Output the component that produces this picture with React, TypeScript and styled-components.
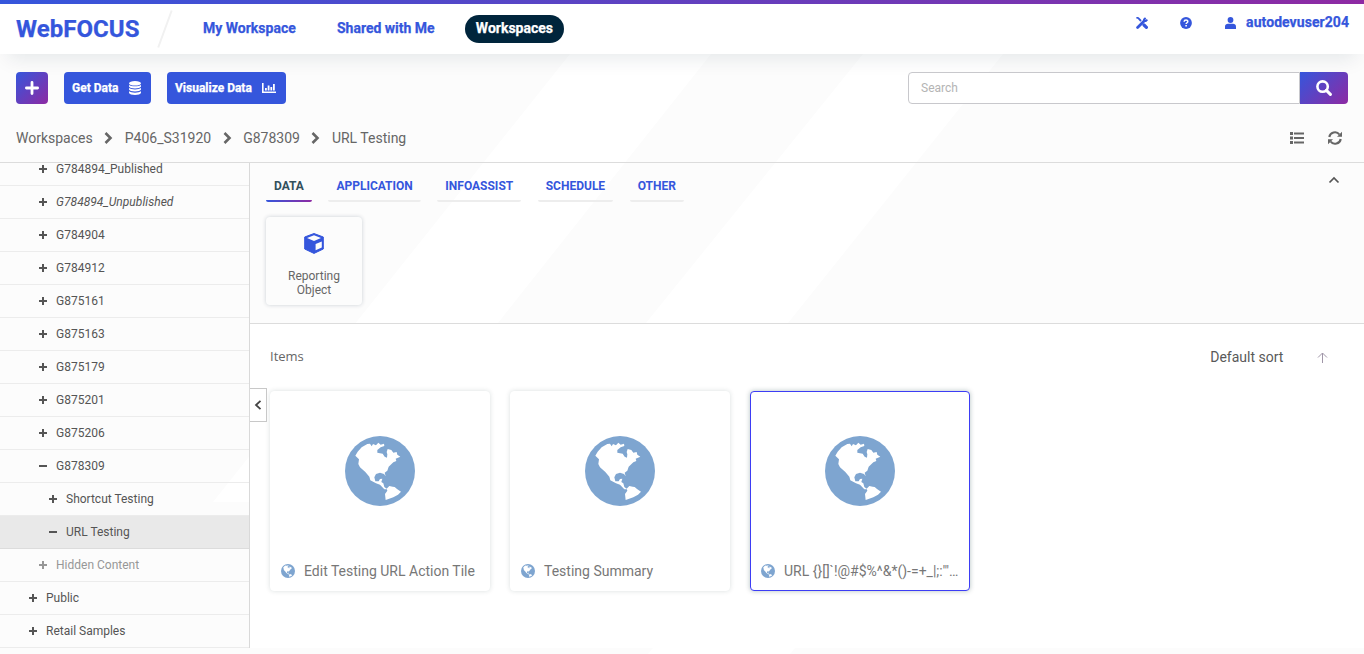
import React from "react";
import styled, { createGlobalStyle, css } from "styled-components";

const GlobalStyle = createGlobalStyle`
  * { box-sizing: border-box; }
  html, body { margin: 0; padding: 0; overflow: hidden; }
  body { font-family: Roboto, "Liberation Sans", sans-serif; font-size: 14px; color: #595959; }
  button, input { font: inherit; }
  button { border: 0; padding: 0; background: none; }
  svg { display: block; flex: none; }
`;

const blue = "#3556dc";
const gradient = "linear-gradient(135deg, #3556dc 0%, #8e2aa3 100%)";

const heavy = css`
  font-weight: 700;
  -webkit-text-stroke: 0.25px currentColor;
`;

const Page = styled.div`
  position: relative;
  isolation: isolate;
  width: 1364px;
  height: 654px;
  display: flex;
  flex-direction: column;
  background: #fcfcfc;
  overflow: hidden;
`;

const Backdrop = styled.svg`
  position: absolute;
  inset: 0;
  z-index: -1;
`;

const TopBar = styled.header`
  height: 54px;
  flex: none;
  border-top: 4px solid transparent;
  background:
    linear-gradient(#fff, #fff) padding-box,
    linear-gradient(90deg, #3556dc, #8e2aa3) border-box;
  box-shadow: 0 12px 20px -8px rgba(0, 37, 60, 0.1);
  display: flex;
  align-items: center;
  padding: 0 15px 0 16px;
`;

const Brand = styled.div`
  width: 141px;
  font-size: 24px;
  ${heavy}
  letter-spacing: 0.05px;
  color: ${blue};
  line-height: 48px;
`;

const Nav = styled.nav`
  display: flex;
  align-items: center;
  gap: 19.2px;
  margin-left: 19px;
  flex: 1;
`;

const NavLink = styled.a<{ $active?: boolean }>`
  height: 28px;
  line-height: 27px;
  padding: 0 11px;
  border-radius: 14px;
  ${heavy}
  white-space: nowrap;
  color: ${(p) => (p.$active ? "#fff" : blue)};
  background: ${(p) => (p.$active ? "#00253c" : "transparent")};
`;

const Account = styled.div`
  display: flex;
  align-items: center;
  height: 36px;
  align-self: flex-start;
  color: ${blue};
  ${heavy}
  letter-spacing: 0.06px;
`;

const AccountIcon = styled.span<{ $gap: number }>`
  margin: 1px ${(p) => p.$gap}px 0 0;
`;

const Toolbar = styled.section`
  height: 66px;
  padding: 18px 16px 0;
  display: flex;
  align-items: flex-start;
  gap: 16px;
`;

const AddButton = styled.button`
  width: 32px;
  height: 32px;
  border-radius: 4px;
  background: ${gradient};
  display: grid;
  place-items: center;
`;

const ActionButton = styled.button<{ $width: number }>`
  width: ${(p) => p.$width}px;
  height: 32px;
  border-radius: 4px;
  padding: 0 10px 0 8px;
  display: flex;
  align-items: center;
  justify-content: space-between;
  background: ${blue};
  color: #fff;
  font-size: 12px;
  ${heavy}
  white-space: nowrap;
`;

const SearchBox = styled.div`
  display: flex;
  width: 440px;
  margin-left: auto;
`;

const SearchInput = styled.input`
  flex: 1;
  height: 32px;
  border: 1px solid #c8c8cc;
  border-radius: 4px 0 0 4px;
  background: #fff;
  padding: 0 12px;
  font-size: 12px;
  &::placeholder { color: #b4b4b4; opacity: 1; }
`;

const SearchButton = styled.button`
  width: 48px;
  height: 32px;
  border-radius: 0 4px 4px 0;
  background: ${gradient};
  display: grid;
  place-items: center;
`;

const PathBar = styled.div`
  height: 43px;
  border-bottom: 1px solid #dcdcdc;
  padding: 0 22px 6px 16px;
  display: flex;
  align-items: center;
  justify-content: space-between;
`;

const Crumbs = styled.div`
  display: flex;
  align-items: center;
  gap: 11.5px;
  line-height: 20px;
  color: #666;
`;

const PathTools = styled.div`
  display: flex;
  align-items: center;
  gap: 24px;
`;

const Body = styled.div`
  height: 485px;
  display: flex;
`;

const Tree = styled.aside`
  width: 250px;
  border-right: 1px solid #d9d9d9;
  overflow: hidden;
  display: flex;
  flex-direction: column;
  justify-content: flex-end;
`;

const TreeRow = styled.div<{ $level: number; $selected?: boolean; $muted?: boolean; $italic?: boolean }>`
  height: 33px;
  flex: none;
  border-bottom: 1px solid ${(p) => (p.$selected ? "#dcdcdc" : "#ececec")};
  padding: 0 0 0 ${(p) => 18 + p.$level * 10}px;
  display: flex;
  align-items: center;
  gap: 8px;
  font-size: 12px;
  color: #555;
  ${(p) => p.$selected && css`background: #e9e9e9;`}
  ${(p) => p.$muted && css`color: #979797;`}
  ${(p) => p.$italic && css`font-style: italic; letter-spacing: 0.04px;`}
`;

const Main = styled.main`
  flex: 1;
  display: flex;
  flex-direction: column;
`;

const CreatePanel = styled.section`
  height: 161px;
  border-bottom: 1px solid #dcdcdc;
  padding: 7px 24px 0 16px;
`;

const TabStrip = styled.div`
  display: flex;
  justify-content: space-between;
`;

const Tabs = styled.div`
  display: flex;
  gap: 16.5px;
`;

const Tab = styled.div<{ $active?: boolean }>`
  height: 32px;
  padding: 0 8px;
  font-size: 12px;
  line-height: 32px;
  font-weight: 700;
  color: ${(p) => (p.$active ? "#33505c" : blue)};
  border-radius: 2px;
  background: linear-gradient(90deg, ${(p) => (p.$active ? "#3556dc, #8e2aa3" : "#ededed, #ededed")}) bottom / 100% 2px no-repeat;
`;

const CreateTile = styled.div`
  width: 96px;
  height: 88px;
  margin-top: 15px;
  border-radius: 4px;
  background: #fcfcfc;
  box-shadow: 0 0 4px rgba(0, 37, 60, 0.2);
  display: flex;
  flex-direction: column;
  align-items: center;
  padding-top: 16px;
  font-size: 12px;
  line-height: 14px;
  text-align: center;
  color: #666;
`;

const TileLabel = styled.span`
  width: 60px;
  margin-top: 15px;
`;

const ItemsPanel = styled.section`
  position: relative;
  flex: 1;
  background: #fff;
  padding: 22px 35.6px 0 20px;
`;

const ItemsHeader = styled.div`
  height: 22px;
  display: flex;
  align-items: center;
  justify-content: space-between;
`;

const ItemsTitle = styled.span`
  font-family: "Open Sans", Roboto, sans-serif;
  font-size: 13px;
  line-height: 18px;
  padding-bottom: 2px;
  color: #666;
`;

const Sort = styled.div`
  display: flex;
  align-items: center;
  gap: 33px;
`;

const CardRow = styled.div`
  display: flex;
  gap: 20px;
  margin-top: 23px;
`;

const Card = styled.article<{ $selected?: boolean }>`
  width: 220px;
  height: 200px;
  border-radius: 4px;
  border: 1px solid ${(p) => (p.$selected ? "#3d3df5" : "#fff")};
  background: #fff;
  box-shadow: 0 0 5px rgba(0, 50, 50, ${(p) => (p.$selected ? 0.3 : 0.15)});
  display: flex;
  flex-direction: column;
`;

const CardArt = styled.div`
  height: 158px;
  display: grid;
  place-items: center;
`;

const CardCaption = styled.div`
  height: 40px;
  padding: 2px 10px 0;
  display: flex;
  align-items: center;
  gap: 9px;
  line-height: 16px;
  color: #777;
  white-space: nowrap;
`;

const CollapseHandle = styled.button`
  position: absolute;
  left: 0;
  top: 64px;
  width: 17px;
  height: 34px;
  border: 1px solid #c8c8c8;
  border-left: 0;
  background: #fff;
  display: grid;
  place-items: center;
`;

const Globe = ({ size }: { size: number }) => (
  <svg width={size} height={size} viewBox="285 288 210 210">
    <circle cx="390" cy="393" r="105" fill="#7ea5d0" />
    <path
      fill="#fff"
      d="M316 347L323 335L335 322L352 312L360 311L365 319L369 312L378 316L385 308L392 314L402 311L403 318L392 322L382 330L382 338L398 341L404 350L411 353L412 343L410 336L413 327L424 330L430 338L440 336L442 344L451 350L437 356L439 363L430 367L416 380L412 392L404 398L407 409L402 402L390 398L378 402L373 412L376 424L386 424L390 417L397 416L394 426L400 430L403 441L411 447L403 448L390 434L378 430L361 421L358 410L346 396L330 382L325 372L327 358Z M410 446L418 438L428 440L434 441L441 447L453 455L444 464L430 472L407 480L405 462L412 452Z"
    />
  </svg>
);

const Sign = ({ minus }: { minus?: boolean }) => (
  <svg width="10" height="10" viewBox="0 0 10 10" fill="currentColor">
    <rect x="1" y="4" width="8" height="2" />
    {!minus && <rect x="4" y="1" width="2" height="8" />}
  </svg>
);

const Chevron = () => (
  <svg width="9" height="12" viewBox="0 0 9 12" fill="none" stroke="#666" strokeWidth="2.6">
    <path d="M1.5 1L6.5 6L1.5 11" />
  </svg>
);

const tree = [
  { label: "G784894_Published", level: 2 },
  { label: "G784894_Unpublished", level: 2, italic: true },
  { label: "G784904", level: 2 },
  { label: "G784912", level: 2 },
  { label: "G875161", level: 2 },
  { label: "G875163", level: 2 },
  { label: "G875179", level: 2 },
  { label: "G875201", level: 2 },
  { label: "G875206", level: 2 },
  { label: "G878309", level: 2, open: true },
  { label: "Shortcut Testing", level: 3 },
  { label: "URL Testing", level: 3, open: true, selected: true },
  { label: "Hidden Content", level: 2, muted: true },
  { label: "Public", level: 1 },
  { label: "Retail Samples", level: 1 },
];

const crumbs = ["Workspaces", "P406_S31920", "G878309", "URL Testing"];
const tabs = ["DATA", "APPLICATION", "INFOASSIST", "SCHEDULE", "OTHER"];
const items = ["Edit Testing URL Action Tile", "Testing Summary", "URL {}[]`!@#$%^&*()-=+_|;:'\"…"];

export default function App() {
  return (
    <Page>
      <GlobalStyle />
      <Backdrop width="1364" height="654" fill="#fff">
        <path d="M570 54H711L498 323L357 502H213Z" />
        <path d="M863 54H1003L788 323L645 502H504L646 323Z" />
        <path d="M653 648H795L790 654H648Z" />
      </Backdrop>

      <TopBar>
        <Brand>WebFOCUS</Brand>
        <svg width="16" height="38" viewBox="0 0 16 38">
          <path d="M14.7 0.5L1.2 37.5" stroke="#f1f1f1" strokeWidth="2" />
        </svg>
        <Nav>
          <NavLink>My Workspace</NavLink>
          <NavLink>Shared with Me</NavLink>
          <NavLink $active>Workspaces</NavLink>
        </Nav>
        <Account>
          <AccountIcon $gap={32}>
            <svg width="12" height="12" viewBox="0 0 12 12" fill="none" stroke={blue}>
              <path d="M0.4 0.4L2.4 1.2L5 4" strokeWidth="1.9" />
              <path d="M8 8L10.4 10.4" strokeWidth="3.2" strokeLinecap="round" />
              <path d="M1.6 10.4L8.6 3.4" strokeWidth="2.8" strokeLinecap="round" />
              <path d="M9.6 0.8L8 2.4V4.2H9.8L11.4 2.6" strokeWidth="1.8" />
            </svg>
          </AccountIcon>
          <AccountIcon $gap={33}>
            <svg width="12" height="12" viewBox="0 0 12 12">
              <circle cx="6" cy="6" r="5.9" fill={blue} />
              <path d="M4.1 4.7C4.2 2.5 7.9 2.6 7.8 4.6C7.8 5.8 6.1 5.7 6.1 7.1" fill="none" stroke="#fff" strokeWidth="1.5" />
              <rect x="5.3" y="8" width="1.6" height="1.5" fill="#fff" />
            </svg>
          </AccountIcon>
          <AccountIcon $gap={10}>
            <svg width="11" height="12" viewBox="0 0 11 12" fill={blue}>
              <circle cx="5.5" cy="3" r="2.9" />
              <path d="M0 12V9.6C0 7.7 1.3 6.8 3 6.8H8C9.7 6.8 11 7.7 11 9.6V12Z" />
            </svg>
          </AccountIcon>
          autodevuser204
        </Account>
      </TopBar>

      <Toolbar>
        <AddButton>
          <svg width="14" height="14" viewBox="0 0 14 14" stroke="#fff" strokeWidth="2.8" strokeLinecap="round">
            <path d="M7 1.4V12.6M1.4 7H12.6" />
          </svg>
        </AddButton>
        <ActionButton $width={87}>
          Get Data
          <svg width="12" height="14" viewBox="0 0 12 14" fill="#fff">
            <ellipse cx="6" cy="2.3" rx="6" ry="2.3" />
            <path d="M0 3.9C2 5.8 10 5.8 12 3.9V5.5C11.5 8.1 0.5 8.1 0 5.5Z" />
            <path d="M0 7.1C2 9 10 9 12 7.1V8.6C11.5 11.2 0.5 11.2 0 8.6Z" />
            <path d="M0 10.2C2 12.1 10 12.1 12 10.2V11.7C11.5 14.6 0.5 14.6 0 11.7Z" />
          </svg>
        </ActionButton>
        <ActionButton $width={119}>
          Visualize Data
          <svg width="14" height="10" viewBox="0 0 14 10" fill="#fff">
            <path d="M0 0H1.6V8.4H14V10H0Z" />
            <path d="M3 5H4.8V7.4H3ZM5.7 2.6H7.5V7.4H5.7ZM8.4 4H10.2V7.4H8.4ZM11 1H12.8V7.4H11Z" />
          </svg>
        </ActionButton>
        <SearchBox>
          <SearchInput placeholder="Search" />
          <SearchButton>
            <svg width="16" height="16" viewBox="0 0 16 16" fill="none" stroke="#fff" strokeWidth="2.6">
              <circle cx="6.6" cy="6.6" r="5.2" />
              <path d="M10.4 10.4L14.4 14.4" strokeWidth="3" strokeLinecap="round" />
            </svg>
          </SearchButton>
        </SearchBox>
      </Toolbar>

      <PathBar>
        <Crumbs>
          {crumbs.map((name, i) => (
            <React.Fragment key={name}>
              {i > 0 && <Chevron />}
              <span>{name}</span>
            </React.Fragment>
          ))}
        </Crumbs>
        <PathTools>
          <svg width="14" height="12" viewBox="0 0 14 12" fill="#666">
            <path d="M0 0H3V3H0ZM4 0.5H14V2.5H4ZM0 4.5H3V7.5H0ZM4 5H14V7H4ZM0 9H3V12H0ZM4 9.5H14V11.5H4Z" />
          </svg>
          <svg width="14" height="14" viewBox="0 0 14 14">
            <path d="M1.3 6C2 1.2 8.5 -0.5 11.4 3.5M12.7 8C12 12.8 5.5 14.5 2.6 10.5" fill="none" stroke="#666" strokeWidth="2.1" />
            <path d="M14 0.8V5.8H9ZM0 13.2V8.2H5Z" fill="#666" />
          </svg>
        </PathTools>
      </PathBar>

      <Body>
        <Tree>
          {tree.map((n) => (
            <TreeRow key={n.label} $level={n.level} $selected={n.selected} $muted={n.muted} $italic={n.italic}>
              <Sign minus={n.open} />
              {n.label}
            </TreeRow>
          ))}
        </Tree>
        <Main>
          <CreatePanel>
            <TabStrip>
              <Tabs>
                {tabs.map((t, i) => (
                  <Tab key={t} $active={i === 0}>{t}</Tab>
                ))}
              </Tabs>
              <svg width="12" height="20" viewBox="0 0 12 20" fill="none" stroke="#555" strokeWidth="1.7">
                <path d="M1.5 12.5L6 8L10.5 12.5" />
              </svg>
            </TabStrip>
            <CreateTile>
              <svg width="20" height="21" viewBox="0 0 20 21">
                <path d="M10 0.5L19.3 4V16L10 20.4L0.7 16V4Z" fill={blue} stroke={blue} strokeLinejoin="round" />
                <path d="M10 2.3L17 4.9L10 8L3 4.9ZM11.6 11L17.8 8.4V14.4L11.6 17.2Z" fill="#fcfcfc" />
              </svg>
              <TileLabel>Reporting Object</TileLabel>
            </CreateTile>
          </CreatePanel>
          <ItemsPanel>
            <ItemsHeader>
              <ItemsTitle>Items</ItemsTitle>
              <Sort>
                Default sort
                <svg width="12" height="12" viewBox="0 0 12 12" fill="none" stroke="#a096a8">
                  <path d="M6.5 12V2M2 6.5L6.5 2L11 6.5" />
                </svg>
              </Sort>
            </ItemsHeader>
            <CardRow>
              {items.map((name, i) => (
                <Card key={name} $selected={i === 2}>
                  <CardArt><Globe size={70} /></CardArt>
                  <CardCaption>
                    <Globe size={14} />
                    <span>{name}</span>
                  </CardCaption>
                </Card>
              ))}
            </CardRow>
            <CollapseHandle>
              <svg width="8" height="10" viewBox="0 0 8 10" fill="none" stroke="#444" strokeWidth="1.8">
                <path d="M6.5 0.8L2 5L6.5 9.2" />
              </svg>
            </CollapseHandle>
          </ItemsPanel>
        </Main>
      </Body>
    </Page>
  );
}
